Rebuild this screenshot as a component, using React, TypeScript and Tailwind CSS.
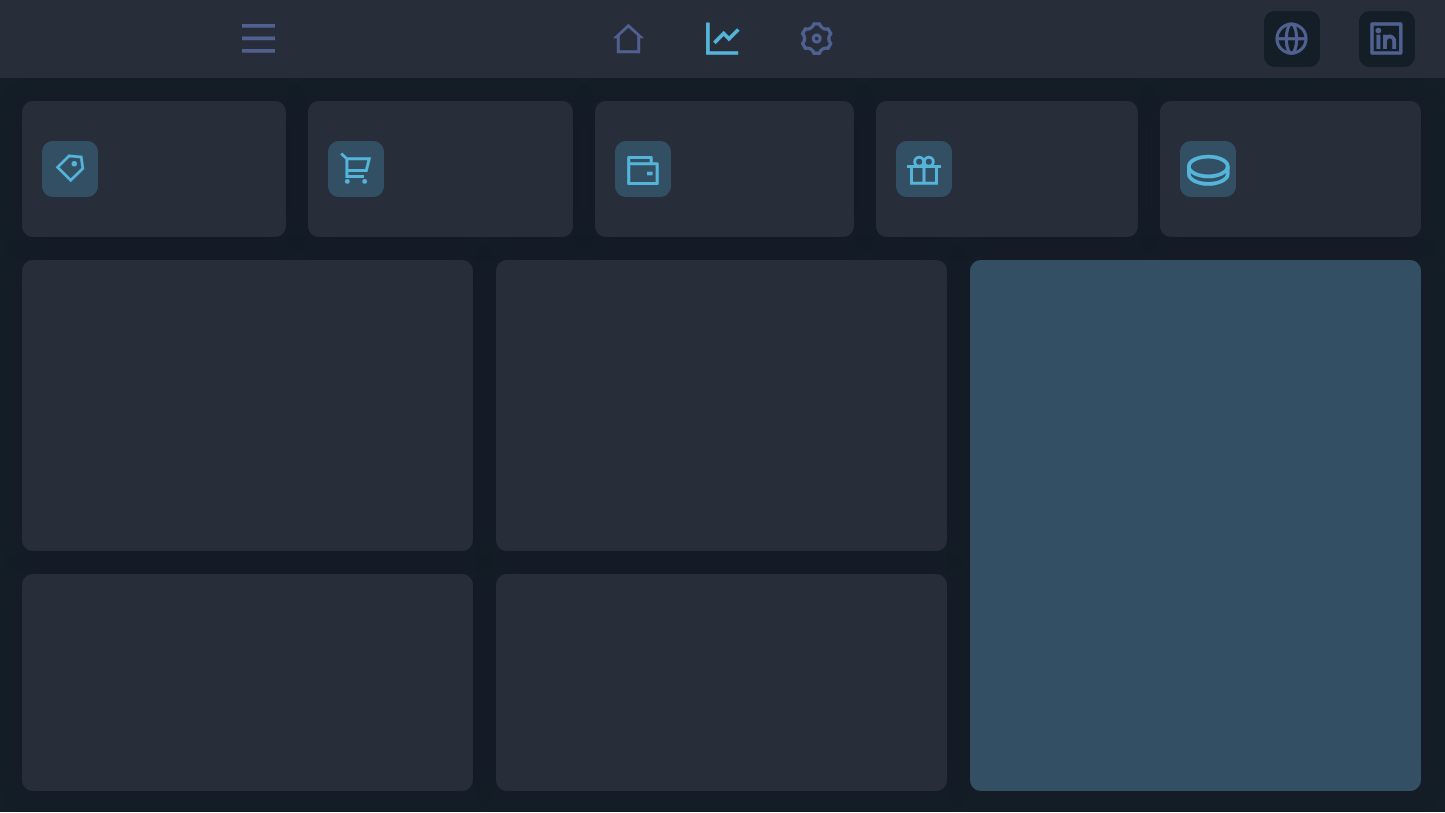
import React, { useState } from 'react';

const navItems = [
  { id: 'home', label: 'Home', icon: <HomeIcon /> },
  { id: 'analytics', label: 'Analytics', icon: <ChartIcon /> },
  { id: 'settings', label: 'Settings', icon: <GearIcon /> },
];

const stats = [
  { id: 'tags', icon: <TagIcon /> },
  { id: 'cart', icon: <CartIcon /> },
  { id: 'wallet', icon: <WalletIcon /> },
  { id: 'gifts', icon: <GiftIcon /> },
  { id: 'coins', icon: <CoinIcon /> },
];

function HomeIcon() {
  return (
    <svg width="34" height="34" viewBox="0 0 34 34" fill="currentColor" fillRule="evenodd">
      <path d="M.8 16.2 16.4 1.7 32.2 16.2H28.2V31.2H4.8V16.2ZM16.4 5.7 7.8 13.7V28.2H25.2V13.7Z" />
    </svg>
  );
}

function ChartIcon() {
  return (
    <svg width="34" height="34" viewBox="0 0 34 34" fill="none" stroke="currentColor" strokeWidth="3.7">
      <path d="M1.9.4V31H32.2" />
      <path d="M8.4 20.9 17.7 11.4 23 16.9 32.4 7.5" />
    </svg>
  );
}

function GearIcon() {
  return (
    <svg width="34" height="34" viewBox="-16.7 -16.6 34 34" fill="none" stroke="currentColor" strokeWidth="3.4">
      <path
        strokeLinejoin="round"
        d="M-2.8-14.7H2.8C3.7-11 7.6-8.7 11.3-9.8L14.1-4.9C11.4-2.3 11.4 2.3 14.1 4.9L11.3 9.8C7.6 8.7 3.7 11 2.8 14.7H-2.8C-3.7 11-7.6 8.7-11.3 9.8L-14.1 4.9C-11.4 2.3-11.4-2.3-14.1-4.9L-11.3-9.8C-7.6-8.7-3.7-11-2.8-14.7Z"
      />
      <circle r="3.4" strokeWidth="3.2" />
    </svg>
  );
}

function MenuIcon() {
  return (
    <svg width="33" height="34" viewBox="0 0 33 34" fill="currentColor">
      <rect y="2" width="33" height="3.7" />
      <rect y="14.5" width="33" height="3.7" />
      <rect y="27" width="33" height="3.7" />
    </svg>
  );
}

function GlobeIcon() {
  return (
    <svg width="34" height="34" viewBox="0 0 34 34" fill="none" stroke="currentColor" strokeWidth="3.2">
      <circle cx="16.5" cy="16.7" r="14.5" />
      <ellipse cx="16.5" cy="16.7" rx="5.2" ry="14.5" />
      <path d="M2 16.7H31" />
    </svg>
  );
}

function LinkedInIcon() {
  return (
    <svg width="34" height="34" viewBox="0 0 34 34" fill="none" stroke="currentColor" strokeWidth="3.5">
      <rect x="2" y="2.1" width="28.8" height="29" strokeLinejoin="round" />
      <circle cx="8.4" cy="8.6" r="2.8" fill="currentColor" stroke="none" />
      <path strokeWidth="3.9" d="M8.4 12.7V27M15 27V12.7M15 20C15 13 24.2 12.6 24.2 19.5V27" />
    </svg>
  );
}

function TagIcon() {
  return (
    <svg width="56" height="56" viewBox="0 0 56 56" fill="none" stroke="currentColor" strokeWidth="2.8">
      <path d="M27.3 14.8 39.2 16 40.8 27.4 28.7 39.2 15.6 26.3Z" />
      <circle cx="32.3" cy="22.7" r="2.7" fill="currentColor" stroke="none" />
    </svg>
  );
}

function CartIcon() {
  return (
    <svg width="56" height="56" viewBox="0 0 56 56" fill="none" stroke="currentColor" strokeWidth="3">
      <path d="M13.2 12.5 18.9 17.8H41.2L38.3 29.6H18.9M18.9 17.8V35.4H36" />
      <circle cx="19.3" cy="40.4" r="2.4" fill="currentColor" stroke="none" />
      <circle cx="36.7" cy="40.4" r="2.4" fill="currentColor" stroke="none" />
    </svg>
  );
}

function WalletIcon() {
  return (
    <svg width="56" height="56" viewBox="0 0 56 56" fill="none" stroke="currentColor" strokeWidth="3.1">
      <path strokeLinejoin="round" d="M36.2 22.8V16.5H13.7V42.5H42.2V22.8H13.7" />
      <rect x="32" y="30.7" width="5.6" height="3.6" fill="currentColor" stroke="none" />
    </svg>
  );
}

function GiftIcon() {
  return (
    <svg width="56" height="56" viewBox="0 0 56 56" fill="none" stroke="currentColor" strokeWidth="3">
      <path d="M11 25.6H45M15.5 25.6V42.3H40.5V25.6M28 19V42.3" />
      <circle cx="23.2" cy="20.7" r="4.5" />
      <circle cx="32.8" cy="20.7" r="4.5" />
    </svg>
  );
}

function CoinIcon() {
  return (
    <svg width="56" height="56" viewBox="0 0 56 56" fill="none" stroke="currentColor" strokeWidth="3.8">
      <ellipse cx="28.3" cy="25.5" rx="19.4" ry="9.9" />
      <path d="M8.9 25.5V33C8.9 38.5 17.6 42.9 28.3 42.9S47.7 38.5 47.7 33V25.5" />
    </svg>
  );
}

function Panel({ className = '' }: { className?: string }) {
  return <section className={`rounded-[11px] shadow-[0_0_20px_#181b28] ${className}`} />;
}

export default function Dashboard() {
  const [active, setActive] = useState('analytics');

  return (
    <div className="bg-[#141e27]">
      <header className="grid grid-cols-[1fr_auto_1fr] items-center bg-[#282d3a] pl-[31px] pr-[30px] py-[11px] text-[#506091]">
        <div className="pl-[211px]">
          <button type="button" aria-label="Menu" className="block">
            <MenuIcon />
          </button>
        </div>

        <nav className="flex gap-[60px]">
          {navItems.map((item) => (
            <button
              key={item.id}
              type="button"
              aria-label={item.label}
              onClick={() => setActive(item.id)}
              className={active === item.id ? 'text-[#55b4da]' : 'hover:text-[#55b4da]'}
            >
              {item.icon}
            </button>
          ))}
        </nav>

        <div className="flex justify-end gap-[39px]">
          <a href="#website" aria-label="Website" className="flex size-14 items-center justify-center rounded-[11px] bg-[#141e27]">
            <GlobeIcon />
          </a>
          <a href="#linkedin" aria-label="LinkedIn" className="flex size-14 items-center justify-center rounded-[11px] bg-[#141e27]">
            <LinkedInIcon />
          </a>
        </div>
      </header>

      <main className="flex flex-col gap-[23px] pt-[23px] pr-6 pb-[21px] pl-[22px]">
        <div className="grid grid-cols-[264fr_265fr_259fr_262fr_261fr] gap-[22px]">
          {stats.map((stat) => (
            <div key={stat.id} className="rounded-[11px] bg-[#282d3a] py-10 pl-5 shadow-[0_0_20px_#181b28]">
              <div className="size-14 rounded-[11px] bg-[#334f63] text-[#55b4da]">{stat.icon}</div>
            </div>
          ))}
        </div>

        <div className="grid grid-cols-3 grid-rows-[291px_217px] gap-[23px]">
          <Panel className="bg-[#282d3a]" />
          <Panel className="bg-[#282d3a]" />
          <Panel className="row-span-2 bg-[#334f63]" />
          <Panel className="bg-[#282d3a]" />
          <Panel className="bg-[#282d3a]" />
        </div>
      </main>
    </div>
  );
}
